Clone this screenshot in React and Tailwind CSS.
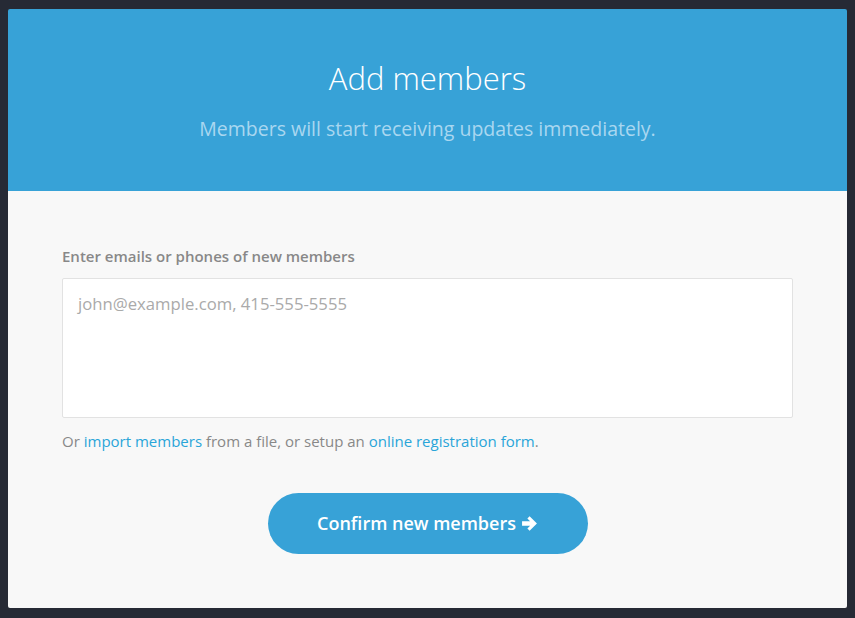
import { useState } from "react"

export default function App() {
  const [value, setValue] = useState("")

  return (
    <div className="w-[855px] h-[618px] bg-[#262a35] pt-[9px] pl-[8px] font-['Open_Sans',sans-serif]">
      <div className="w-[839px] h-[599px] flex flex-col rounded-[2px] overflow-hidden">
        {/* Header */}
        <div className="h-[182px] bg-[#37a2d7] flex flex-col items-center">
          <h1 className="mt-[50px] text-[31px] font-light text-white leading-[38px]">Add members</h1>
          <p className="mt-[19px] text-[19.5px] text-[#a9d7f0] leading-[26px]">
            Members will start receiving updates immediately.
          </p>
        </div>

        {/* Body */}
        <div className="flex-1 bg-[#f8f8f8] px-[54px] pt-[55px]">
          <label className="block text-[15px] font-semibold text-[#888] leading-[20px]">
            Enter emails or phones of new members
          </label>
          <textarea
            value={value}
            onChange={(e) => setValue(e.target.value)}
            placeholder="john@example.com, 415-555-5555"
            className="mt-[12px] block w-[731px] h-[140px] bg-white border border-[#e2e2e2] rounded-[2px] px-[15px] py-[12px] text-[16.7px] text-[#555] placeholder:text-[#aaa] resize-none outline-none"
          />
          <p className="mt-[12px] text-[15px] text-[#888] leading-[22px]">
            Or <a href="#" className="text-[#2aa5d8]">import members</a> from a file, or setup an{" "}
            <a href="#" className="text-[#2aa5d8]">online registration form</a>.
          </p>
          <div className="flex justify-center mt-[41px]">
            <button className="w-[320px] h-[61px] rounded-full bg-[#37a2d7] text-white text-[18px] font-semibold flex items-center justify-center gap-[5px]">
              Confirm new members
              <svg width="17" height="17" viewBox="0 0 16 16" fill="white">
                <path d="M1 5.8h7.6L6 3.2 8.1 1.1 15 8l-6.9 6.9L6 12.8l2.6-2.6H1z" />
              </svg>
            </button>
          </div>
        </div>
      </div>
    </div>
  )
}
